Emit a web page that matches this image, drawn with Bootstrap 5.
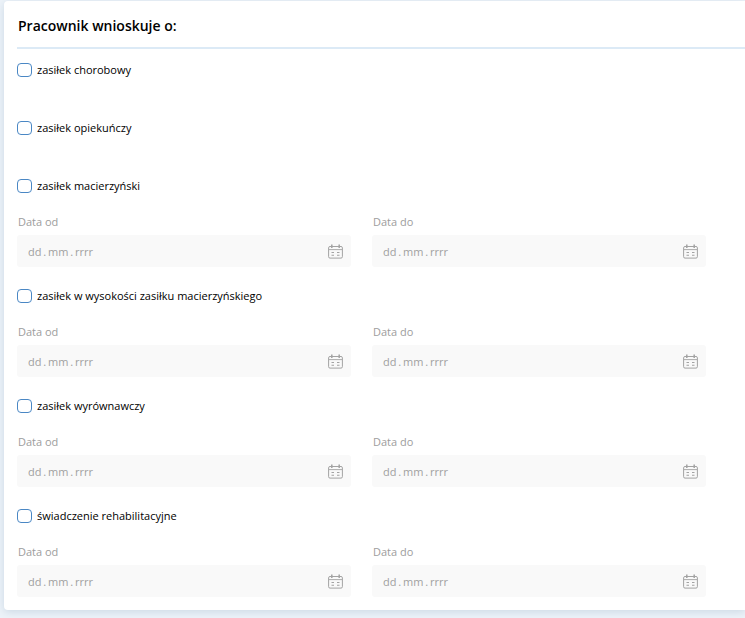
<!DOCTYPE html>
<html lang="pl">
<head>
<meta charset="utf-8">
<meta name="viewport" content="width=device-width, initial-scale=1">
<title>Pracownik wnioskuje o</title>
<link href="https://cdn.jsdelivr.net/npm/bootstrap@5.3.0/dist/css/bootstrap.min.css" rel="stylesheet">
<style>
body { background: #edf3f9; font-family: "Open Sans", "Noto Sans", sans-serif; font-size: 11px; line-height: 16px; color: #000; }
.panel { margin: 1px 0 8px 4px; padding: 16px 0 13px 13px; background: #fff; border-radius: 4px 0 0 4px; box-shadow: 0 2px 8px #cbd8e4; }
.panel-title { margin: 0 0 13px; padding: 0 0 12px 1px; font-size: 14px; line-height: 18px; font-weight: 600; color: #000; border-bottom: 2px solid #dceaf6; }
.options { display: grid; padding-right: 39px; }
.option { margin-bottom: 42px; }
.option.dated { margin-bottom: 21px; }
.option.dated:last-child { margin-bottom: 0; }
.option .form-check-input { width: 15px; height: 14px; margin: 0; border: 1px solid #4a87c4; border-radius: 4px; background-color: #fff; flex: none; }
.choice { gap: 5px; height: 16px; }
.dates { --bs-gutter-x: 21px; margin-top: 20px; }
.dates .form-label { display: block; margin: 0 0 5px; padding-left: 1px; font-size: 11px; color: #9d9d9d; }
.dates .input-group { background: #f9f9f9; border-radius: 3px; height: 32px; }
.dates .form-control { font-size: 11px; line-height: 16px; padding: 8px 11px; border: 0; background: transparent; height: 32px; min-height: 0; }
.dates .form-control::placeholder { color: #a0a0a0; opacity: 1; }
.pick { padding: 0 8px; border: 0; line-height: 0; color: #a3a3a3; }
</style>
<script src="https://cdn.jsdelivr.net/npm/bootstrap@5.3.0/dist/js/bootstrap.bundle.min.js"></script>
</head>
<body>
<svg class="d-none" aria-hidden="true">
  <symbol id="calendar" viewBox="0 0 15 15">
    <g fill="none" stroke="currentColor">
      <rect x="0.6" y="2.5" width="13.8" height="11.6" rx="1.4"/>
      <path d="M1 5.6H14" stroke-width=".9"/>
      <path d="M3.8 .6V4M11.2 .6V4" stroke-width="1.5"/>
      <path d="M3.5 8.5H6M9 8.5H11.5M3.5 11.3H6M9 11.3H11.5" stroke-width="1.1"/>
    </g>
  </symbol>
</svg>
<main class="panel">
  <h1 class="panel-title">Pracownik wnioskuje o:</h1>
  <form class="options">
    <div class="option"><div class="choice d-flex align-items-center"><input class="form-check-input" type="checkbox" id="c1"><label for="c1">zasiłek chorobowy</label></div></div>
    <div class="option"><div class="choice d-flex align-items-center"><input class="form-check-input" type="checkbox" id="c2"><label for="c2">zasiłek opiekuńczy</label></div></div>
    <div class="option dated">
      <div class="choice d-flex align-items-center"><input class="form-check-input" type="checkbox" id="c3"><label for="c3">zasiłek macierzyński</label></div>
      <div class="row dates">
        <div class="col-6"><label class="form-label" for="f3">Data od</label><div class="input-group flex-nowrap"><input class="form-control" id="f3" type="text" placeholder="dd&#8201;.&#8201;mm&#8201;.&#8201;rrrr" disabled><button class="btn pick" type="button" aria-label="Kalendarz"><svg width="15" height="15"><use href="#calendar"/></svg></button></div></div>
        <div class="col-6"><label class="form-label" for="t3">Data do</label><div class="input-group flex-nowrap"><input class="form-control" id="t3" type="text" placeholder="dd&#8201;.&#8201;mm&#8201;.&#8201;rrrr" disabled><button class="btn pick" type="button" aria-label="Kalendarz"><svg width="15" height="15"><use href="#calendar"/></svg></button></div></div>
      </div>
    </div>
    <div class="option dated">
      <div class="choice d-flex align-items-center"><input class="form-check-input" type="checkbox" id="c4"><label for="c4">zasiłek w wysokości zasiłku macierzyńskiego</label></div>
      <div class="row dates">
        <div class="col-6"><label class="form-label" for="f4">Data od</label><div class="input-group flex-nowrap"><input class="form-control" id="f4" type="text" placeholder="dd&#8201;.&#8201;mm&#8201;.&#8201;rrrr" disabled><button class="btn pick" type="button" aria-label="Kalendarz"><svg width="15" height="15"><use href="#calendar"/></svg></button></div></div>
        <div class="col-6"><label class="form-label" for="t4">Data do</label><div class="input-group flex-nowrap"><input class="form-control" id="t4" type="text" placeholder="dd&#8201;.&#8201;mm&#8201;.&#8201;rrrr" disabled><button class="btn pick" type="button" aria-label="Kalendarz"><svg width="15" height="15"><use href="#calendar"/></svg></button></div></div>
      </div>
    </div>
    <div class="option dated">
      <div class="choice d-flex align-items-center"><input class="form-check-input" type="checkbox" id="c5"><label for="c5">zasiłek wyrównawczy</label></div>
      <div class="row dates">
        <div class="col-6"><label class="form-label" for="f5">Data od</label><div class="input-group flex-nowrap"><input class="form-control" id="f5" type="text" placeholder="dd&#8201;.&#8201;mm&#8201;.&#8201;rrrr" disabled><button class="btn pick" type="button" aria-label="Kalendarz"><svg width="15" height="15"><use href="#calendar"/></svg></button></div></div>
        <div class="col-6"><label class="form-label" for="t5">Data do</label><div class="input-group flex-nowrap"><input class="form-control" id="t5" type="text" placeholder="dd&#8201;.&#8201;mm&#8201;.&#8201;rrrr" disabled><button class="btn pick" type="button" aria-label="Kalendarz"><svg width="15" height="15"><use href="#calendar"/></svg></button></div></div>
      </div>
    </div>
    <div class="option dated">
      <div class="choice d-flex align-items-center"><input class="form-check-input" type="checkbox" id="c6"><label for="c6">świadczenie rehabilitacyjne</label></div>
      <div class="row dates">
        <div class="col-6"><label class="form-label" for="f6">Data od</label><div class="input-group flex-nowrap"><input class="form-control" id="f6" type="text" placeholder="dd&#8201;.&#8201;mm&#8201;.&#8201;rrrr" disabled><button class="btn pick" type="button" aria-label="Kalendarz"><svg width="15" height="15"><use href="#calendar"/></svg></button></div></div>
        <div class="col-6"><label class="form-label" for="t6">Data do</label><div class="input-group flex-nowrap"><input class="form-control" id="t6" type="text" placeholder="dd&#8201;.&#8201;mm&#8201;.&#8201;rrrr" disabled><button class="btn pick" type="button" aria-label="Kalendarz"><svg width="15" height="15"><use href="#calendar"/></svg></button></div></div>
      </div>
    </div>
  </form>
</main>
</body>
</html>
